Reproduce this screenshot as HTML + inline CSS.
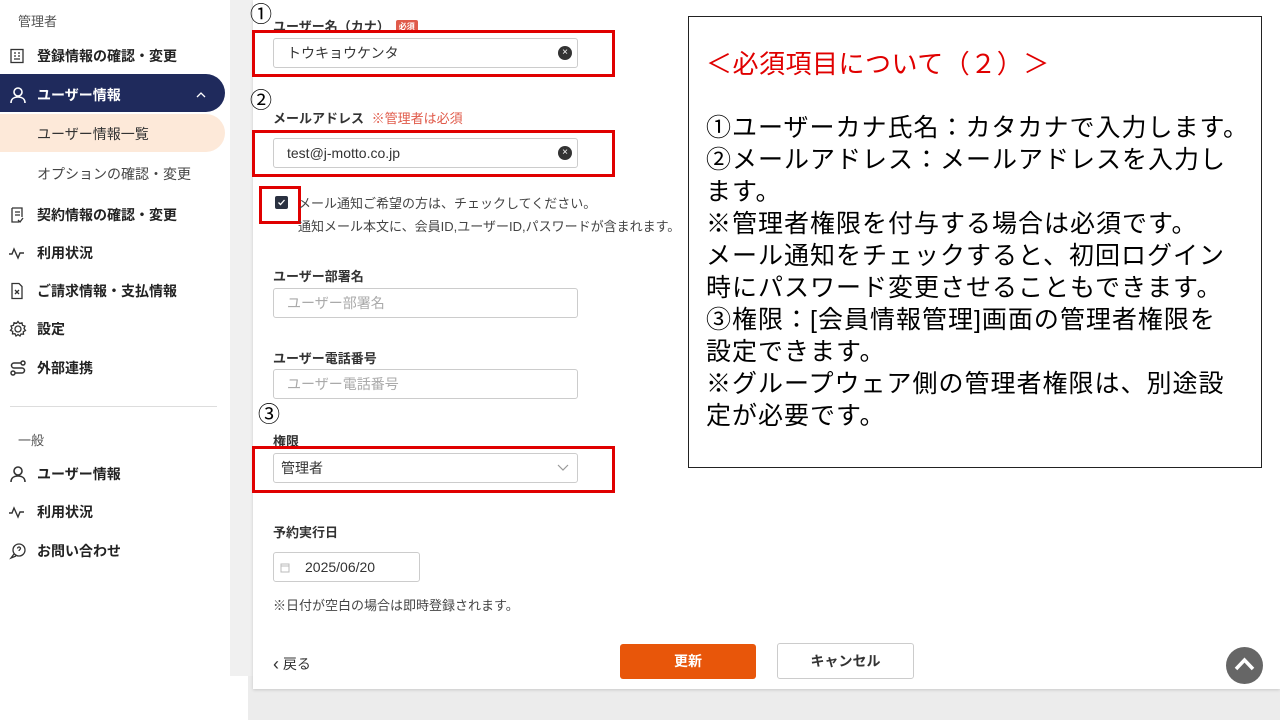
<!DOCTYPE html>
<html><head><meta charset="utf-8"><style>
*{margin:0;padding:0;box-sizing:border-box}
body{width:1280px;height:720px;overflow:hidden;background:#ececec;font-family:"Liberation Sans","Noto Sans CJK JP",sans-serif;position:relative;color:#333}
.abs{position:absolute}
#side{left:0;top:0;width:230px;height:720px;background:#fff}
#strip{left:230px;top:0;width:23px;height:676px;background:#f0f0f0}
#card{left:253px;top:0;width:1027px;height:689px;background:#fff;box-shadow:0 1px 3px rgba(0,0,0,.15)}
.nav{position:absolute;left:0;font-size:14px;font-weight:bold;color:#222;display:flex;align-items:center}
.nav svg{position:absolute;left:9px}
.nav span{position:absolute;left:37px;white-space:nowrap}
.lbl{position:absolute;left:273px;font-size:13px;font-weight:bold;color:#333}
.inp{position:absolute;left:273px;width:305px;height:30px;border:1px solid #ccc;border-radius:3px;font-size:14px;padding-left:13px;line-height:28px;color:#333}
.ph{color:#aaa}
.red{position:absolute;border:3px solid #e00000}
.clr{position:absolute;right:5px;top:7px;width:14px;height:14px;border-radius:50%;background:#333;color:#fff;font-size:10px;line-height:14px;text-align:center}
.num{position:absolute;font-size:22px;color:#000;line-height:1}
.cl{white-space:nowrap}
</style></head><body>
<div id="side" class="abs">
<div class="abs" style="left:18px;top:11px;font-size:13px;color:#555">管理者</div>
<div class="nav" style="top:45px;height:22px"><svg width="16" height="16" viewBox="0 0 16 16" fill="none" stroke="#333" stroke-width="1.3"><rect x="2" y="1.5" width="12" height="13"/><path d="M5 5h2M9 5h2M5 8h2M9 8h2M5 11h6"/></svg><span>登録情報の確認・変更</span></div>
<div class="abs" style="left:0;top:74px;width:225px;height:38px;background:#1f2a5c;border-radius:0 19px 19px 0"></div>
<div class="nav" style="top:84px;height:22px;color:#fff"><svg width="18" height="18" viewBox="0 0 18 18" fill="none" stroke="#fff" stroke-width="1.6"><circle cx="9" cy="6" r="4"/><path d="M2 17c0-4 3-6 7-6s7 2 7 6"/></svg><span>ユーザー情報</span><svg style="left:195px" width="12" height="12" viewBox="0 0 12 12" fill="none" stroke="#fff" stroke-width="1.3"><path d="M2 8l4-4 4 4"/></svg></div>
<div class="abs" style="left:0;top:114px;width:225px;height:38px;background:#fde9d9;border-radius:0 19px 19px 0"></div>
<div class="abs" style="left:37px;top:124px;font-size:14px;color:#333">ユーザー情報一覧</div>
<div class="abs" style="left:37px;top:164px;font-size:14px;color:#444">オプションの確認・変更</div>
<div class="nav" style="top:204px;height:22px"><svg width="16" height="18" viewBox="0 0 16 18" fill="none" stroke="#333" stroke-width="1.3"><path d="M3 2h10v9M3 2v14h7M6 6h5M6 9h5M9 14l2 2 3-4"/></svg><span>契約情報の確認・変更</span></div>
<div class="nav" style="top:242px;height:22px"><svg width="16" height="16" viewBox="0 0 16 16" fill="none" stroke="#333" stroke-width="1.4"><path d="M0 9h3l2-5 4 9 2-5h4"/></svg><span>利用状況</span></div>
<div class="nav" style="top:280px;height:22px"><svg width="16" height="18" viewBox="0 0 16 18" fill="none" stroke="#333" stroke-width="1.3"><path d="M3 1.5h7l3 3v12H3z"/><path d="M6 8l4 4M10 8l-4 4"/></svg><span>ご請求情報・支払情報</span></div>
<div class="nav" style="top:318px;height:22px"><svg width="18" height="18" viewBox="0 0 18 18" fill="none" stroke="#333" stroke-width="1.3"><circle cx="9" cy="9" r="3"/><path d="M9 1.5l1.5 2 2.5-.7.5 2.5 2.5.8-1 2.4 1.5 2-2.2 1.2.2 2.5-2.5-.2L11 16l-2-1.5L7 16l-1-2.3-2.5.2.2-2.5L1.5 10.4l1.5-2-1-2.4 2.5-.8.5-2.5 2.5.7z"/></svg><span>設定</span></div>
<div class="nav" style="top:357px;height:22px"><svg width="18" height="16" viewBox="0 0 18 16" fill="none" stroke="#333" stroke-width="1.5"><circle cx="14" cy="3" r="2"/><circle cx="4" cy="13" r="2"/><path d="M12 3H5a2.5 2.5 0 000 5h8a2.5 2.5 0 010 5H6"/></svg><span>外部連携</span></div>
<div class="abs" style="left:10px;top:406px;width:207px;height:1px;background:#ddd"></div>
<div class="abs" style="left:18px;top:430px;font-size:13px;color:#555">一般</div>
<div class="nav" style="top:463px;height:22px"><svg width="18" height="18" viewBox="0 0 18 18" fill="none" stroke="#333" stroke-width="1.6"><circle cx="9" cy="6" r="4"/><path d="M2 17c0-4 3-6 7-6s7 2 7 6"/></svg><span>ユーザー情報</span></div>
<div class="nav" style="top:501px;height:22px"><svg width="16" height="16" viewBox="0 0 16 16" fill="none" stroke="#333" stroke-width="1.4"><path d="M0 9h3l2-5 4 9 2-5h4"/></svg><span>利用状況</span></div>
<div class="nav" style="top:540px;height:22px"><svg width="18" height="18" viewBox="0 0 18 18" fill="none" stroke="#333" stroke-width="1.3"><circle cx="10" cy="8" r="6"/><path d="M5 12l-3 4 5-2M8.5 6.5a1.5 1.5 0 113 0c0 1-1.5 1.2-1.5 2.5"/></svg><span>お問い合わせ</span></div>
</div>
<div id="strip" class="abs"></div>
<div class="abs" style="left:0;top:676px;width:248px;height:44px;background:#fff"></div>
<div id="card" class="abs"></div>

<div class="num" style="left:250px;top:4px">①</div>
<div class="lbl" style="top:16px">ユーザー名（カナ）<span style="display:inline-block;background:#e05a4a;color:#fff;font-size:8px;padding:1px 3px;border-radius:2px;vertical-align:2px;margin-left:6px">必須</span></div>
<div class="inp" style="top:38px">トウキョウケンタ<div class="clr">×</div></div>
<div class="red" style="left:252px;top:30px;width:363px;height:47px"></div>

<div class="num" style="left:250px;top:90px">②</div>
<div class="lbl" style="top:108px">メールアドレス <span style="color:#e05a4a;font-weight:normal;margin-left:4px">※管理者は必須</span></div>
<div class="inp" style="top:138px">test@j-motto.co.jp<div class="clr">×</div></div>
<div class="red" style="left:252px;top:130px;width:363px;height:47px"></div>

<div class="abs" style="left:275px;top:196px;width:13px;height:13px;background:#2a3140;border-radius:2px"><svg style="position:absolute;left:2px;top:2px" width="9" height="9" viewBox="0 0 9 9" fill="none" stroke="#fff" stroke-width="1.3"><path d="M1.5 4.5l2 2 4-4.5"/></svg></div>
<div class="red" style="left:259px;top:186px;width:42px;height:38px"></div>
<div class="abs" style="left:298px;top:193px;font-size:13px;color:#444">メール通知ご希望の方は、チェックしてください。</div>
<div class="abs" style="left:298px;top:216px;font-size:13px;color:#444;white-space:nowrap;width:390px;overflow:hidden">通知メール本文に、会員ID,ユーザーID,パスワードが含まれます。</div>

<div class="lbl" style="top:266px">ユーザー部署名</div>
<div class="inp ph" style="top:288px">ユーザー部署名</div>
<div class="lbl" style="top:348px">ユーザー電話番号</div>
<div class="inp ph" style="top:369px">ユーザー電話番号</div>

<div class="num" style="left:258px;top:404px">③</div>
<div class="lbl" style="top:431px">権限</div>
<div class="inp" style="top:453px;padding-left:7px">管理者<svg style="position:absolute;right:8px;top:10px" width="12" height="8" viewBox="0 0 12 8" fill="none" stroke="#999" stroke-width="1.2"><path d="M1 1l5 5 5-5"/></svg></div>
<div class="red" style="left:252px;top:446px;width:363px;height:47px"></div>

<div class="lbl" style="top:522px">予約実行日</div>
<div class="inp" style="top:552px;width:147px;padding-left:31px">2025/06/20<svg style="position:absolute;left:6px;top:9px" width="10" height="11" viewBox="0 0 10 11" fill="none" stroke="#bbb"><rect x="1" y="2" width="8" height="8"/><path d="M1 4h8"/></svg></div>
<div class="abs" style="left:273px;top:595px;font-size:13px;color:#444">※日付が空白の場合は即時登録されます。</div>

<div class="abs" style="left:273px;top:654px;font-size:14px;color:#333"><span style="font-size:18px;vertical-align:-1px">‹</span> 戻る</div>
<div class="abs" style="left:620px;top:644px;width:136px;height:35px;background:#e8560a;border-radius:3px;color:#fff;font-size:14px;font-weight:bold;text-align:center;line-height:35px">更新</div>
<div class="abs" style="left:777px;top:643px;width:137px;height:36px;border:1px solid #ccc;border-radius:3px;color:#333;font-size:14px;font-weight:bold;text-align:center;line-height:34px">キャンセル</div>
<div class="abs" style="left:1226px;top:647px;width:37px;height:37px;border-radius:50%;background:#666"><svg style="position:absolute;left:8px;top:10px" width="21" height="14" viewBox="0 0 21 14" fill="none" stroke="#fff" stroke-width="3.5"><path d="M2 12l8.5-9 8.5 9"/></svg></div>

<div class="abs" style="left:688px;top:16px;width:574px;height:452px;border:1px solid #222;background:#fff"></div>
<div class="abs" style="left:706px;top:44px;font-size:26px;letter-spacing:0.5px;color:#e00000;white-space:nowrap">＜必須項目について（２）＞</div>
<div class="abs" style="left:706px;top:112px;width:560px;font-size:25px;letter-spacing:1px;line-height:32px;color:#000">
<div class="cl">①ユーザーカナ氏名：カタカナで入力します。</div>
<div class="cl">②メールアドレス：メールアドレスを入力し</div>
<div class="cl">ます。</div>
<div class="cl">※管理者権限を付与する場合は必須です。</div>
<div class="cl">メール通知をチェックすると、初回ログイン</div>
<div class="cl">時にパスワード変更させることもできます。</div>
<div class="cl">③権限：[会員情報管理]画面の管理者権限を</div>
<div class="cl">設定できます。</div>
<div class="cl">※グループウェア側の管理者権限は、別途設</div>
<div class="cl">定が必要です。</div>
</div>
</body></html>
